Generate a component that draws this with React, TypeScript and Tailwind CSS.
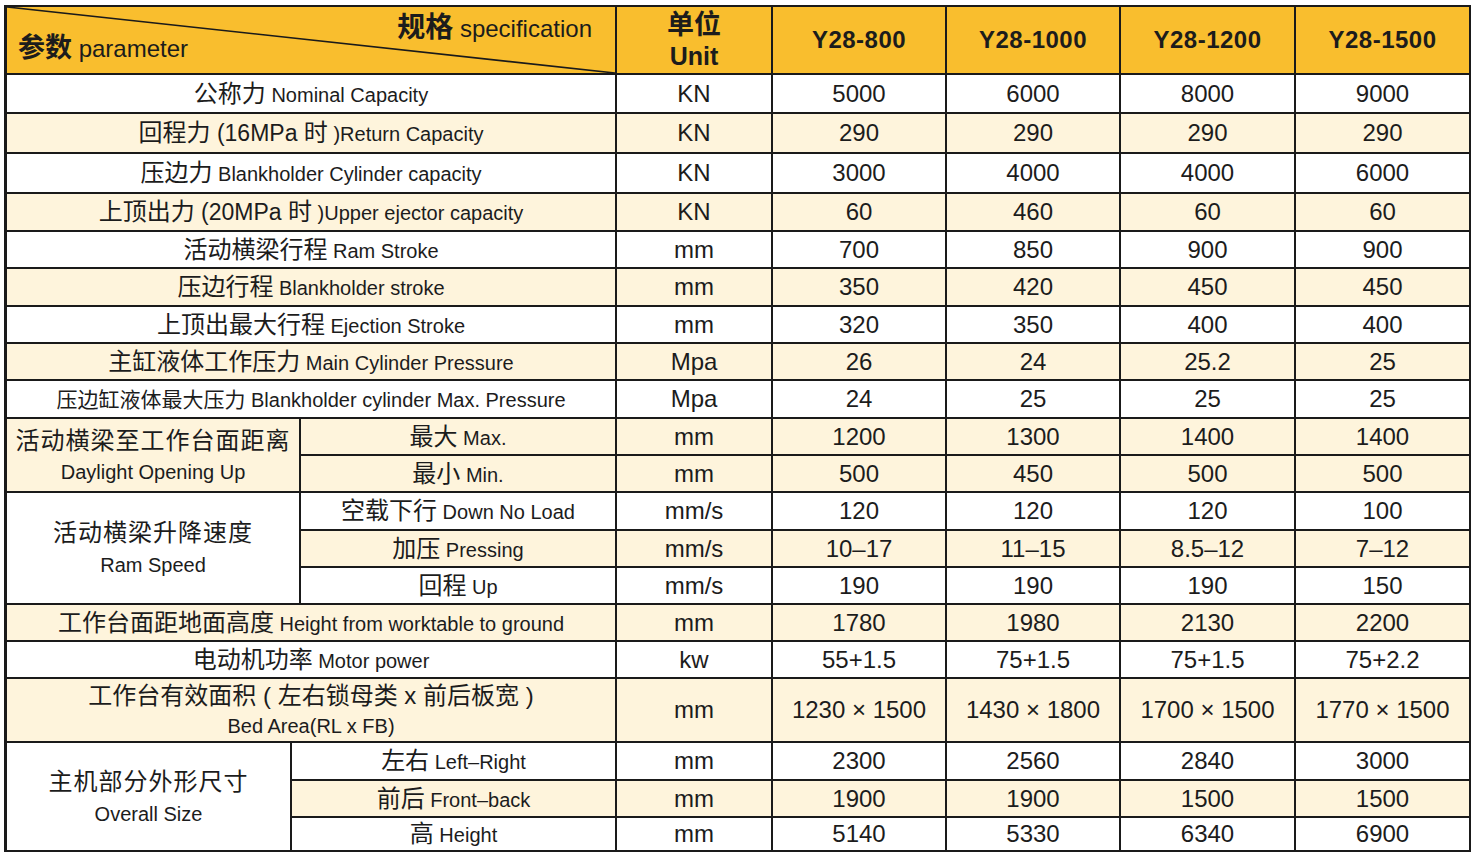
import React from "react";

type Row = { label: string; unit: string; v: string[]; shade: boolean; small?: boolean };

const top: Row[] = [
  { label: "公称力 Nominal Capacity", unit: "KN", v: ["5000", "6000", "8000", "9000"], shade: false },
  { label: "回程力 (16MPa 时 )Return Capacity", unit: "KN", v: ["290", "290", "290", "290"], shade: true },
  { label: "压边力 Blankholder Cylinder capacity", unit: "KN", v: ["3000", "4000", "4000", "6000"], shade: false },
  { label: "上顶出力 (20MPa 时 )Upper ejector capacity", unit: "KN", v: ["60", "460", "60", "60"], shade: true },
  { label: "活动横梁行程 Ram Stroke", unit: "mm", v: ["700", "850", "900", "900"], shade: false },
  { label: "压边行程 Blankholder stroke", unit: "mm", v: ["350", "420", "450", "450"], shade: true },
  { label: "上顶出最大行程 Ejection Stroke", unit: "mm", v: ["320", "350", "400", "400"], shade: false },
  { label: "主缸液体工作压力 Main Cylinder Pressure", unit: "Mpa", v: ["26", "24", "25.2", "25"], shade: true },
  { label: "压边缸液体最大压力 Blankholder cylinder Max. Pressure", unit: "Mpa", v: ["24", "25", "25", "25"], shade: false, small: true },
];

const daylight: Row[] = [
  { label: "最大 Max.", unit: "mm", v: ["1200", "1300", "1400", "1400"], shade: true },
  { label: "最小 Min.", unit: "mm", v: ["500", "450", "500", "500"], shade: true },
];

const ramSpeed: Row[] = [
  { label: "空载下行 Down No Load", unit: "mm/s", v: ["120", "120", "120", "100"], shade: false },
  { label: "加压 Pressing", unit: "mm/s", v: ["10–17", "11–15", "8.5–12", "7–12"], shade: true },
  { label: "回程 Up", unit: "mm/s", v: ["190", "190", "190", "150"], shade: false },
];

const middle: Row[] = [
  { label: "工作台面距地面高度 Height from worktable to ground", unit: "mm", v: ["1780", "1980", "2130", "2200"], shade: true },
  { label: "电动机功率 Motor power", unit: "kw", v: ["55+1.5", "75+1.5", "75+1.5", "75+2.2"], shade: false },
];

const overall: Row[] = [
  { label: "左右 Left–Right", unit: "mm", v: ["2300", "2560", "2840", "3000"], shade: false },
  { label: "前后 Front–back", unit: "mm", v: ["1900", "1900", "1500", "1500"], shade: true },
  { label: "高 Height", unit: "mm", v: ["5140", "5330", "6340", "6900"], shade: false },
];

const models = ["Y28-800", "Y28-1000", "Y28-1200", "Y28-1500"];

// split chinese runs from latin text so each gets its own size
function Mixed({ text, zh = "text-[24px]", en = "text-[20px]" }: { text: string; zh?: string; en?: string }) {
  return (
    <span className="whitespace-pre">
      {text.split(/([\u3400-\u9fff]+)/).map((part, i) =>
        /[\u3400-\u9fff]/.test(part) ? (
          <span key={i} className={zh}>{part}</span>
        ) : (
          // the pressure notes "(16MPa" print a bit larger
          <span key={i} className={part.includes("MPa") ? "text-[23px]" : en}>{part}</span>
        )
      )}
    </span>
  );
}

const cell = "flex items-center justify-center text-center leading-none";
const bg = (shade: boolean) => (shade ? "bg-[#fef4dc]" : "bg-white");

function Values({ r }: { r: Row }) {
  return (
    <>
      <div className={`${cell} ${bg(r.shade)} text-[24px]`}>{r.unit}</div>
      {r.v.map((x, i) => (
        <div key={i} className={`${cell} ${bg(r.shade)} text-[24px]`}>{x}</div>
      ))}
    </>
  );
}

export default function App() {
  return (
    <div className="min-h-screen bg-white pt-[5px] pl-[4px] text-[#1c1c1c] font-['Liberation_Sans','Noto_Sans_CJK_SC',sans-serif]">
      <div className="grid w-fit bg-[#1a1a1a] gap-[2px] pl-[3px] pr-[2px] py-[2px] grid-cols-[283px_7px_314px_154px_172px_172px_173px_173px] grid-rows-[66px_37px_38px_38px_36px_35px_36px_35px_35px_36px_35px_35px_36px_35px_35px_35px_35px_62px_36px_35px_32px]">
        {/* Header */}
        <div className="col-span-3 relative bg-[#f9be2e] flex flex-col pt-[9px] px-[11px]">
          <svg className="absolute inset-0 w-full h-full" viewBox="0 0 100 100" preserveAspectRatio="none">
            <line x1="0" y1="0" x2="100" y2="100" stroke="#1a1a1a" strokeWidth="1.6" vectorEffect="non-scaling-stroke" />
          </svg>
          <div className="relative self-end pr-[12px] leading-[24px] whitespace-pre">
            <span className="text-[28px] font-bold">规格</span>
            <span className="text-[24px]"> specification</span>
          </div>
          <div className="relative mt-[-8px] leading-[24px] whitespace-pre">
            <span className="text-[27px] font-bold">参数</span>
            <span className="text-[24px]"> parameter</span>
          </div>
        </div>
        <div className="bg-[#f9be2e] flex flex-col items-center justify-center gap-[3px] font-bold leading-[28px]">
          <span className="text-[27px]">单位</span>
          <span className="text-[25px]">Unit</span>
        </div>
        {models.map((m) => (
          <div key={m} className={`${cell} bg-[#f9be2e] text-[24px] font-bold tracking-[0.5px]`}>{m}</div>
        ))}

        {top.map((r) => (
          <React.Fragment key={r.label}>
            <div className={`${cell} col-span-3 ${bg(r.shade)}`}>
              {r.small ? <Mixed text={r.label} zh="text-[21px]" en="text-[20px]" /> : <Mixed text={r.label} />}
            </div>
            <Values r={r} />
          </React.Fragment>
        ))}

        {/* Daylight opening */}
        <div className="col-span-2 row-span-2 bg-[#fef4dc] flex flex-col items-center justify-center gap-[9px] leading-none">
          <span className="text-[24px] tracking-[1px]">活动横梁至工作台面距离</span>
          <span className="text-[20px]">Daylight Opening Up</span>
        </div>
        {daylight.map((r) => (
          <React.Fragment key={r.label}>
            <div className={`${cell} ${bg(r.shade)}`}><Mixed text={r.label} /></div>
            <Values r={r} />
          </React.Fragment>
        ))}

        {/* Ram speed */}
        <div className="col-span-2 row-span-3 bg-white flex flex-col items-center justify-center gap-[10px] leading-none">
          <span className="text-[24px] tracking-[1px]">活动横梁升降速度</span>
          <span className="text-[20px]">Ram Speed</span>
        </div>
        {ramSpeed.map((r) => (
          <React.Fragment key={r.label}>
            <div className={`${cell} ${bg(r.shade)}`}><Mixed text={r.label} /></div>
            <Values r={r} />
          </React.Fragment>
        ))}

        {middle.map((r) => (
          <React.Fragment key={r.label}>
            <div className={`${cell} col-span-3 ${bg(r.shade)}`}><Mixed text={r.label} /></div>
            <Values r={r} />
          </React.Fragment>
        ))}

        {/* Bed area */}
        <div className="col-span-3 bg-[#fef4dc] flex flex-col items-center justify-center gap-[8px] leading-none">
          <span className="text-[24px] whitespace-pre">工作台有效面积 ( 左右锁母类 x 前后板宽 )</span>
          <span className="text-[20px]">Bed Area(RL x FB)</span>
        </div>
        <Values r={{ label: "bed", unit: "mm", v: ["1230 × 1500", "1430 × 1800", "1700 × 1500", "1770 × 1500"], shade: true }} />

        {/* Overall size */}
        <div className="row-span-3 bg-white flex flex-col items-center justify-center gap-[10px] leading-none">
          <span className="text-[24px] tracking-[1px]">主机部分外形尺寸</span>
          <span className="text-[20px]">Overall Size</span>
        </div>
        {overall.map((r) => (
          <React.Fragment key={r.label}>
            <div className={`${cell} col-span-2 ${bg(r.shade)}`}><Mixed text={r.label} /></div>
            <Values r={r} />
          </React.Fragment>
        ))}
      </div>
    </div>
  );
}
